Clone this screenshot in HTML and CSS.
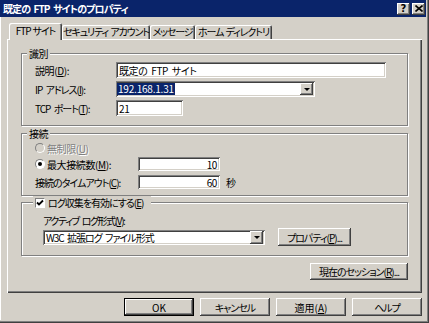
FILE: index.html
```html
<!DOCTYPE html>
<html lang="ja">
<head>
    <meta charset="UTF-8">
    <meta name="viewport" content="width=device-width, initial-scale=1.0">
    <title>既定の FTP サイトのプロパティ</title>
    <link rel="stylesheet" href="styles.css">
</head>
<body>

<div class="window">
    <div class="titlebar">
        <span class="title">既定の FTP サイトのプロパティ</span>
        <div class="caption-buttons">
            <span class="cap-btn help">?</span>
            <span class="cap-btn close">
                <svg width="8" height="7" viewBox="0 0 8 7"><path d="M0.5 0.5 L7.5 6.5 M7.5 0.5 L0.5 6.5" stroke="#000" stroke-width="1.6" fill="none"/></svg>
            </span>
        </div>
    </div>

    <div class="content">
        <div class="tabs">
            <div class="tab active tab-ftp">FTP サイト</div>
            <div class="tab tab-security">セキュリティ アカウント</div>
            <div class="tab tab-message">メッセージ</div>
            <div class="tab tab-home">ホーム ディレクトリ</div>
        </div>

        <div class="panel">
            <div class="group group-ident">
                <div class="group-title">識別</div>
                <div class="row">
                    <span class="label">説明(<u>D</u>):</span>
                    <div class="textbox desc">既定の FTP サイト</div>
                </div>
                <div class="row">
                    <span class="label k">IP アドレス(<u>I</u>):</span>
                    <div class="combo ip">
                        <span class="selected">192.168.1.31</span>
                        <span class="drop"><span class="arrow"></span></span>
                    </div>
                </div>
                <div class="row">
                    <span class="label k">TCP ポート(<u>T</u>):</span>
                    <div class="textbox port">21</div>
                </div>
            </div>

            <div class="group group-conn">
                <div class="group-title">接続</div>
                <div class="row radio-row first">
                    <span class="radio disabled"></span>
                    <span class="disabled-text">無制限(<u>U</u>)</span>
                </div>
                <div class="row radio-row second">
                    <span class="conn-label"><span class="radio checked"></span>最大接続数(<u>M</u>):</span>
                    <div class="textbox num">10</div>
                </div>
                <div class="row third">
                    <span class="conn-label k">接続のタイムアウト(<u>C</u>):</span>
                    <div class="textbox num">60</div>
                    <span class="unit">秒</span>
                </div>
            </div>

            <div class="group group-log">
                <div class="group-title check-title k">
                    <span class="checkbox">
                        <svg width="8" height="8" viewBox="0 0 8 8"><path d="M1 3.5 L3 5.5 L7 1.5" stroke="#000" stroke-width="1.8" fill="none"/></svg>
                    </span>
                    ログ収集を有効にする(<u>E</u>)
                </div>
                <div class="log-label kk">アクティブ ログ形式(<u>V</u>):</div>
                <div class="row log-row">
                    <div class="combo log">
                        <span class="k">W3C 拡張ログ ファイル形式</span>
                        <span class="drop"><span class="arrow"></span></span>
                    </div>
                    <button class="btn prop k">プロパティ(<u>P</u>)...</button>
                </div>
            </div>

            <div class="session-row">
                <button class="btn session k">現在のセッション(<u>R</u>)...</button>
            </div>
        </div>

        <div class="dialog-buttons">
            <button class="btn default">OK</button>
            <button class="btn k">キャンセル</button>
            <button class="btn">適用(<u>A</u>)</button>
            <button class="btn k">ヘルプ</button>
        </div>
    </div>
</div>

</body>
</html>
```

FILE: styles.css
```css
body {
    margin: 0;
    background: #d4d0c8;
    font-family: "MS UI Gothic", "Noto Sans CJK JP", sans-serif;
    font-size: 10px;
    font-feature-settings: "palt" 1;
    letter-spacing: -0.4px;
    word-spacing: 2px;
    color: #000;
}
u {
    text-decoration: underline;
    text-underline-offset: 1px;
}
/* katakana runs: the dialog font has narrow proportional kana */
.k {
    letter-spacing: -1px;
}
.kk {
    letter-spacing: -1.4px;
}
.window {
    width: 429px;
    height: 323px;
    box-sizing: border-box;
    display: flex;
    flex-direction: column;
    padding: 0 3px 3px 0;
    background: #d4d0c8;
    box-shadow: inset -1px -1px #404040, inset -2px -2px #808080;
}
.titlebar {
    height: 17px;
    flex-shrink: 0;
    background: #0a246a;
    color: #fff;
    display: flex;
    align-items: center;
    justify-content: space-between;
    padding: 0 1px 0 3px;
}
.title {
    font-weight: bold;
    font-size: 10px;
    letter-spacing: -0.9px;
}
.caption-buttons {
    display: flex;
    gap: 2px;
}
.cap-btn {
    width: 13px;
    height: 12px;
    background: #d4d0c8;
    color: #000;
    box-shadow: inset -1px -1px #404040, inset 1px 1px #fff, inset -2px -2px #808080;
    display: flex;
    align-items: center;
    justify-content: center;
    font-family: "DejaVu Sans", sans-serif;
    font-weight: bold;
    font-size: 10px;
    line-height: 12px;
    letter-spacing: 0;
}
.content {
    flex: 1;
    display: flex;
    flex-direction: column;
    padding: 6px 0 0 7px;
    box-shadow: inset 1px 0 #fff;
}
.tabs {
    display: flex;
    align-items: flex-end;
    height: 17px;
    padding-left: 2px;
    margin-bottom: -1px;
    position: relative;
    z-index: 1;
    letter-spacing: -1.1px;
    word-spacing: 1px;
}
.tab {
    height: 14px;
    margin-bottom: 1px;
    line-height: 14px;
    text-align: center;
    box-sizing: border-box;
    background: #d4d0c8;
    border-radius: 2px 2px 0 0;
    box-shadow: inset 1px 1px #fff, inset -1px 0 #404040, inset -2px 0 #808080;
    white-space: nowrap;
}
.tab.active {
    height: 17px;
    margin-bottom: 0;
    line-height: 16px;
}
.tab-ftp { width: 53px; }
.tab-security { width: 88px; }
.tab-message { width: 45px; }
.tab-home { width: 77px; }
.panel {
    height: 254px;
    margin-right: 4px;
    box-sizing: border-box;
    padding-top: 14px;
    box-shadow: inset 1px 1px #fff, inset -1px -1px #404040, inset -2px -2px #808080;
}
.group {
    margin: 0 14px;
    border: 1px solid #808080;
    box-shadow: 1px 1px 0 #fff, inset 1px 1px 0 #fff;
    padding: 0 0 9px 13px;
}
.group-title {
    width: fit-content;
    margin: -7px 0 0 -8px;
    padding: 0 2px;
    line-height: 13px;
    background: #d4d0c8;
    position: relative;
}
.row {
    display: flex;
    align-items: center;
}
.group-ident .row {
    height: 16px;
    margin-top: 3px;
}
.group-ident .group-title + .row {
    margin-top: 2px;
}
.label {
    width: 81px;
    flex-shrink: 0;
    white-space: nowrap;
}
.textbox, .combo {
    background: #fff;
    box-sizing: border-box;
    box-shadow: inset 1px 1px #808080, inset -1px -1px #fff, inset 2px 2px #404040, inset -2px -2px #d4d0c8;
    padding: 0 3px;
    white-space: nowrap;
    display: flex;
    align-items: center;
}
.group-ident .textbox, .group-ident .combo {
    height: 16px;
}
.desc { width: 270px; }
.port { width: 67px; }
.combo {
    justify-content: space-between;
    padding: 2px 2px 2px 3px;
}
.ip { width: 199px; }
.selected {
    background: #0a246a;
    color: #fff;
    padding: 0 1px;
    margin-left: -2px;
    line-height: 12px;
    letter-spacing: -0.2px;
}
.drop {
    width: 13px;
    align-self: stretch;
    background: #d4d0c8;
    box-shadow: inset -1px -1px #404040, inset 1px 1px #fff, inset -2px -2px #808080;
    display: flex;
    align-items: center;
    justify-content: center;
}
.arrow {
    width: 0;
    height: 0;
    border-left: 3px solid transparent;
    border-right: 3px solid transparent;
    border-top: 3px solid #000;
}
.group-conn {
    margin-top: 7px;
    padding-bottom: 6px;
}
.group-conn .row {
    height: 14px;
}
.group-conn .first { margin-top: 1px; }
.group-conn .second { margin-top: 2px; }
.group-conn .third { margin-top: 4px; }
.radio {
    width: 10px;
    height: 10px;
    border-radius: 50%;
    background: #fff;
    box-sizing: border-box;
    border: 1px solid;
    border-color: #808080 #fff #fff #808080;
    margin-right: 2px;
    flex-shrink: 0;
    display: inline-flex;
    align-items: center;
    justify-content: center;
}
.radio.disabled {
    background: #d4d0c8;
}
.radio.checked::after {
    content: "";
    width: 4px;
    height: 4px;
    border-radius: 50%;
    background: #000;
}
.disabled-text {
    color: #808080;
    text-shadow: 1px 1px 0 #fff;
}
.conn-label {
    width: 103px;
    flex-shrink: 0;
    display: flex;
    align-items: center;
    white-space: nowrap;
}
.num {
    width: 82px;
    height: 14px;
    justify-content: flex-end;
}
.unit {
    margin-left: 6px;
}
.group-log {
    margin-top: 6px;
    padding-left: 21px;
}
.check-title {
    display: flex;
    align-items: center;
    margin-left: -10px;
    padding-right: 8px;
}
.checkbox {
    width: 10px;
    height: 10px;
    box-sizing: border-box;
    background: #fff;
    border: 1px solid;
    border-color: #808080 #fff #fff #808080;
    display: inline-flex;
    align-items: center;
    justify-content: center;
    margin-right: 3px;
}
.log-label {
    margin-top: 5px;
    line-height: 13px;
}
.log-row {
    height: 18px;
    margin-top: 1px;
}
.log {
    width: 222px;
    height: 15px;
    padding: 1px 2px 1px 3px;
}
.btn {
    font-family: inherit;
    font-size: inherit;
    font-feature-settings: "palt" 1;
    color: #000;
    background: #d4d0c8;
    border: none;
    padding: 0;
    box-shadow: inset -1px -1px #404040, inset 1px 1px #fff, inset -2px -2px #808080;
    height: 18px;
    white-space: nowrap;
}
.prop {
    width: 73px;
    margin-left: 13px;
}
.session-row {
    display: flex;
    justify-content: flex-end;
    margin: 7px 14px 0 0;
}
.session {
    width: 98px;
    height: 17px;
}
.dialog-buttons {
    display: flex;
    justify-content: flex-end;
    gap: 6px;
    margin: 5px 4px 0 0;
}
.dialog-buttons .btn {
    width: 70px;
}
.btn.default {
    box-shadow: inset 0 0 0 1px #000, inset -2px -2px #404040, inset 2px 2px #fff, inset -3px -3px #808080;
}
```
